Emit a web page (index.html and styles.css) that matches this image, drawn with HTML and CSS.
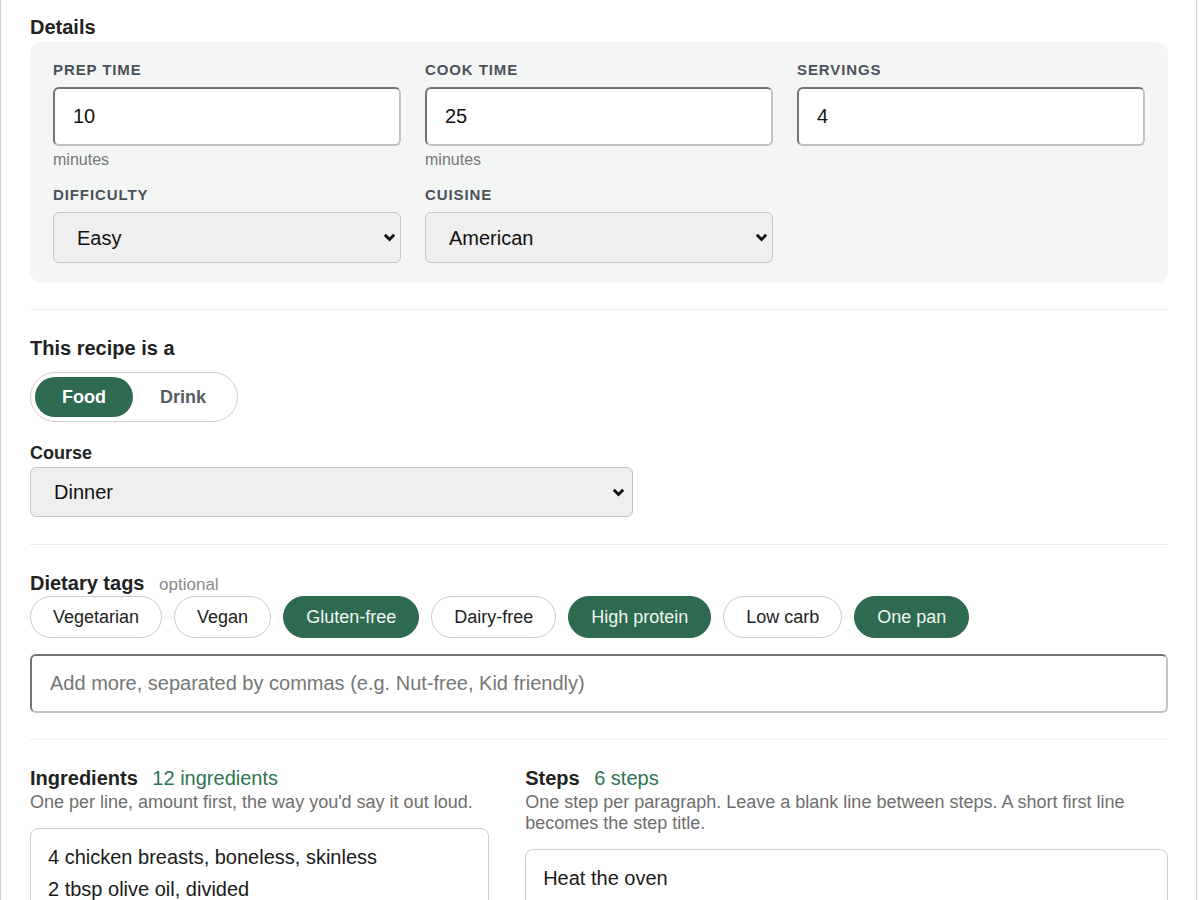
FILE: index.html
```html
<!DOCTYPE html>
<html lang="en">
<head>
  <meta charset="UTF-8">
  <meta name="viewport" content="width=device-width, initial-scale=1.0">
  <title>Edit Recipe</title>
  <link rel="stylesheet" href="styles.css">
</head>
<body>

    <div class="card">

        <!-- Details -->
        <section class="section first">
            <h2 class="section-title">Details</h2>
            <div class="details-box">
                <div class="field">
                    <label class="small-label" for="prep">Prep time</label>
                    <input class="text-input" type="text" id="prep" value="10">
                    <span class="unit">minutes</span>
                </div>
                <div class="field">
                    <label class="small-label" for="cook">Cook time</label>
                    <input class="text-input" type="text" id="cook" value="25">
                    <span class="unit">minutes</span>
                </div>
                <div class="field">
                    <label class="small-label" for="servings">Servings</label>
                    <input class="text-input" type="text" id="servings" value="4">
                </div>
                <div class="field">
                    <label class="small-label" for="difficulty">Difficulty</label>
                    <select class="select" id="difficulty">
                        <option>Easy</option>
                        <option>Medium</option>
                        <option>Hard</option>
                    </select>
                </div>
                <div class="field">
                    <label class="small-label" for="cuisine">Cuisine</label>
                    <select class="select" id="cuisine">
                        <option>American</option>
                        <option>Italian</option>
                        <option>Mexican</option>
                    </select>
                </div>
            </div>
        </section>

        <!-- Jenis resep -->
        <section class="section">
            <h2 class="section-title">This recipe is a</h2>
            <div class="toggle">
                <button class="toggle-btn active">Food</button>
                <button class="toggle-btn">Drink</button>
            </div>
            <label class="field-label" for="course">Course</label>
            <select class="select course-select" id="course">
                <option>Dinner</option>
                <option>Lunch</option>
                <option>Breakfast</option>
            </select>
        </section>

        <!-- Tags -->
        <section class="section tags-section">
            <h2 class="section-title">Dietary tags <span class="optional">optional</span></h2>
            <div class="chips">
                <button class="chip">Vegetarian</button>
                <button class="chip">Vegan</button>
                <button class="chip on">Gluten-free</button>
                <button class="chip">Dairy-free</button>
                <button class="chip on">High protein</button>
                <button class="chip">Low carb</button>
                <button class="chip on">One pan</button>
            </div>
            <input class="text-input tag-input" type="text" placeholder="Add more, separated by commas (e.g. Nut-free, Kid friendly)">
        </section>

        <!-- Bahan dan langkah -->
        <section class="section two-col">
            <div class="col">
                <h2 class="section-title">Ingredients <span class="count">12 ingredients</span></h2>
                <p class="hint">One per line, amount first, the way you'd say it out loud.</p>
                <textarea class="big-text">4 chicken breasts, boneless, skinless
2 tbsp olive oil, divided
1 tsp smoked paprika
1 tsp garlic powder
1/2 tsp dried oregano
Salt and black pepper
1 lb baby potatoes, halved
2 cups green beans, trimmed
1 lemon, sliced
3 cloves garlic, smashed
2 tbsp butter
Fresh parsley, chopped</textarea>
            </div>
            <div class="col">
                <h2 class="section-title">Steps <span class="count">6 steps</span></h2>
                <p class="hint">One step per paragraph. Leave a blank line between steps. A short first line becomes the step title.</p>
                <textarea class="big-text">Heat the oven
Preheat the oven to 425°F and line a large sheet pan.

Season the chicken
Rub the chicken with 1 tbsp oil, paprika, garlic powder, oregano, salt and pepper.</textarea>
            </div>
        </section>

    </div>

</body>
</html>
```

FILE: styles.css
```css
body {
  margin: 0;
  font-family: "Liberation Sans", Arial, sans-serif;
  color: #222;
  background-color: #fff;
}

/* Kartu utama */
.card {
  width: 1197px;
  box-sizing: border-box;
  border-left: 1px solid #d4d4d4;
  border-right: 1px solid #d4d4d4;
  padding: 16px 28px 40px 29px;
}

.section {
  padding: 27px 0;
  border-bottom: 1px solid #ececec;
}

.section.first {
  padding-top: 0;
  padding-bottom: 26px;
}

.section-title {
  margin: 0;
  font-size: 20px;
  font-weight: bold;
  color: #222;
}

/* Kotak details abu-abu */
.details-box {
  margin-top: 3px;
  background-color: #f4f6f5;
  border-radius: 12px;
  padding: 19px 23px 20px;
  display: grid;
  grid-template-columns: repeat(3, 1fr);
  column-gap: 24px;
  row-gap: 17px;
}

.field {
  display: flex;
  flex-direction: column;
}

.small-label {
  font-size: 15px;
  font-weight: bold;
  text-transform: uppercase;
  letter-spacing: 0.06em;
  color: #4b5259;
  margin-bottom: 9px;
}

.text-input {
  width: 100%;
  box-sizing: border-box;
  font-family: inherit;
  font-size: 20px;
  color: #111;
  padding: 16px 18px;
  border: 2px solid;
  border-color: #747474 #c2c2c2 #c2c2c2 #747474;
  border-radius: 6px;
  background-color: #fff;
}

.text-input::placeholder {
  color: #767676;
}

.unit {
  margin-top: 5px;
  font-size: 16px;
  color: #777;
}

/* select dengan panah sendiri biar lebih tebal */
.select {
  appearance: none;
  width: 100%;
  height: 51px;
  box-sizing: border-box;
  font-family: inherit;
  font-size: 20px;
  color: #111;
  padding: 0 30px 0 23px;
  background-color: #efefef;
  background-image: url("data:image/svg+xml,%3Csvg xmlns='http://www.w3.org/2000/svg' width='13' height='9' viewBox='0 0 13 9'%3E%3Cpath d='M1.8 1.8l4.7 4.7 4.7-4.7' fill='none' stroke='%23111' stroke-width='2.8'/%3E%3C/svg%3E");
  background-repeat: no-repeat;
  background-position: right 4px center;
  border: 1px solid #c4c4c4;
  border-radius: 6px;
}

/* Toggle food / drink */
.toggle {
  display: inline-flex;
  margin-top: 12px;
  padding: 4px;
  border: 1px solid #cfcfcf;
  border-radius: 999px;
}

.toggle-btn {
  font-family: inherit;
  font-size: 18px;
  font-weight: bold;
  line-height: 22px;
  padding: 9px 27px;
  border: none;
  border-radius: 999px;
  background: transparent;
  color: #555c63;
}

.toggle-btn.active {
  background-color: #2d6a4f;
  color: #fff;
}

.field-label {
  display: block;
  margin-top: 21px;
  margin-bottom: 3px;
  font-size: 18px;
  font-weight: bold;
}

.course-select {
  width: 603px;
  height: 50px;
  background-position: right 7px center;
}

/* Tags */
.tags-section {
  padding-bottom: 26px;
}

.optional {
  margin-left: 9px;
  font-size: 17px;
  font-weight: normal;
  color: #8a8a8a;
}

.chips {
  display: flex;
  flex-wrap: wrap;
  gap: 12px;
  margin-top: 1px;
}

.chip {
  font-family: inherit;
  font-size: 18px;
  line-height: 20px;
  padding: 10px 22px;
  border: 1px solid #cccccc;
  border-radius: 999px;
  background-color: #fff;
  color: #222;
}

.chip.on {
  background-color: #2d6a4f;
  border-color: #2d6a4f;
  color: #f2f5f3;
}

.tag-input {
  margin-top: 16px;
}

/* Ingredients dan steps */
.two-col {
  display: grid;
  grid-template-columns: 5fr 7fr;
  column-gap: 36px;
  border-bottom: none;
}

.count {
  margin-left: 9px;
  font-weight: normal;
  color: #2f7352;
}

.hint {
  margin: 2px 0 0;
  font-size: 18px;
  color: #6e6e6e;
}

.big-text {
  display: block;
  width: 100%;
  height: 440px;
  box-sizing: border-box;
  margin-top: 15px;
  font-family: inherit;
  font-size: 20px;
  line-height: 32px;
  color: #1a1a1a;
  padding: 12px 17px;
  border: 1px solid #cfcfcf;
  border-radius: 8px;
  resize: none;
}
```
